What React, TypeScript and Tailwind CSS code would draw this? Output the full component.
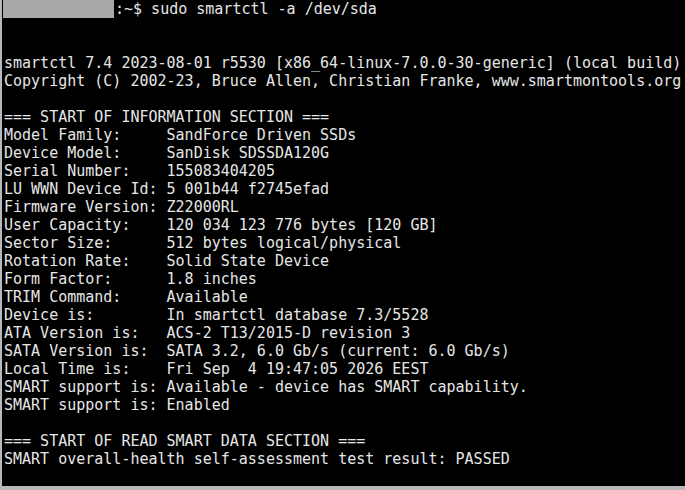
import React from "react";

const lines: string[] = [
  "",
  "",
  "smartctl 7.4 2023-08-01 r5530 [x86_64-linux-7.0.0-30-generic] (local build)",
  "Copyright (C) 2002-23, Bruce Allen, Christian Franke, www.smartmontools.org",
  "",
  "=== START OF INFORMATION SECTION ===",
  "Model Family:     SandForce Driven SSDs",
  "Device Model:     SanDisk SDSSDA120G",
  "Serial Number:    155083404205",
  "LU WWN Device Id: 5 001b44 f2745efad",
  "Firmware Version: Z22000RL",
  "User Capacity:    120 034 123 776 bytes [120 GB]",
  "Sector Size:      512 bytes logical/physical",
  "Rotation Rate:    Solid State Device",
  "Form Factor:      1.8 inches",
  "TRIM Command:     Available",
  "Device is:        In smartctl database 7.3/5528",
  "ATA Version is:   ACS-2 T13/2015-D revision 3",
  "SATA Version is:  SATA 3.2, 6.0 Gb/s (current: 6.0 Gb/s)",
  "Local Time is:    Fri Sep  4 19:47:05 2026 EEST",
  "SMART support is: Available - device has SMART capability.",
  "SMART support is: Enabled",
  "",
  "=== START OF READ SMART DATA SECTION ===",
  "SMART overall-health self-assessment test result: PASSED",
];

export default function App() {
  return (
    <div className="w-[685px] h-[490px] bg-black border-l-2 border-b-4 border-[#b8b8b8] overflow-hidden">
      <div className="pl-[2px] text-[15px] leading-[18px] text-[#e6e6e6] font-['DejaVu_Sans_Mono',monospace] whitespace-pre">
        <div className="flex items-center h-[18px]">
          {/* redacted user@host */}
          <span className="inline-block w-[111px] h-[18px] bg-[#a9a9a9] -ml-[1px] mr-[1px]" />
          <span>:~$ sudo smartctl -a /dev/sda</span>
        </div>
        {lines.map((l, i) => (
          <div key={i} className="h-[18px]">
            {l || " "}
          </div>
        ))}
      </div>
    </div>
  );
}
